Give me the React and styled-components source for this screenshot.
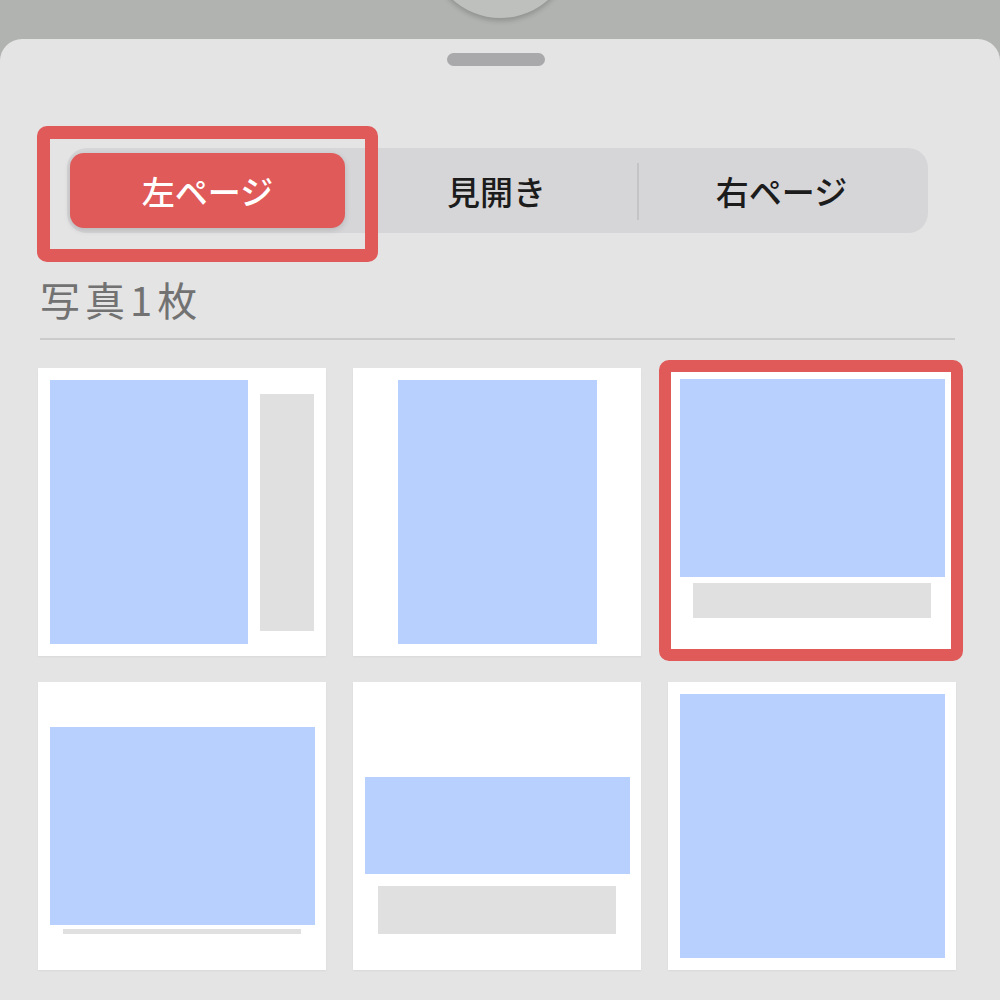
import styled, { createGlobalStyle } from 'styled-components'

const GlobalStyle = createGlobalStyle`
    html, body {
        margin: 0;
        padding: 0;
        background: #b1b3b0;
        font-family: "Noto Sans CJK JP", "Noto Sans", sans-serif;
    }
`

const RED = '#e05a5a'

const Screen = styled.div`
    width: 1000px;
    height: 1000px;
    display: flex;
    flex-direction: column;
    background: #b1b3b0;
    overflow: hidden;
    position: relative;
`

const TopBar = styled.div`
    height: 39px;
    flex-shrink: 0;
    display: flex;
    justify-content: center;
    position: relative;
`

const Knob = styled.div`
    position: absolute;
    top: -125px;
    width: 143px;
    height: 143px;
    border-radius: 50%;
    background: #bec0bd;
    box-shadow: 0 3px 5px rgba(0, 0, 0, 0.18);
`

const Sheet = styled.div`
    flex: 1;
    background: #e4e4e4;
    border-radius: 22px 22px 0 0;
    padding: 14px 45px 0 38px;
    display: flex;
    flex-direction: column;
`

const Handle = styled.div`
    align-self: center;
    width: 98px;
    height: 13px;
    border-radius: 7px;
    background: #a9a9ab;
    margin-left: -1px;
`

const Segmented = styled.div`
    position: relative;
    margin: 82px 27px 0 29px;
    height: 85px;
    box-sizing: border-box;
    padding: 5px 4px 5px 3px;
    display: flex;
    align-items: stretch;
    background: #d6d6d8;
    border-radius: 20px;
`

const Segment = styled.div`
    flex: ${p => (p.$active ? '0 0 275px' : '1')};
    margin-right: ${p => (p.$active ? '9px' : '0')};
    display: flex;
    align-items: center;
    justify-content: center;
    font-size: 33px;
    font-weight: 500;
    color: ${p => (p.$active ? '#ffffff' : '#1c1c1c')};
    background: ${p => (p.$active ? RED : 'transparent')};
    border-radius: 14px;
    box-shadow: ${p => (p.$active ? '0 2px 6px rgba(0, 0, 0, 0.15)' : 'none')};
    border-left: ${p => (p.$divider ? '2px solid #c4c4c6' : 'none')};
    border-radius: ${p => (p.$divider ? '0' : '14px')};
    margin-top: ${p => (p.$divider ? '10px' : '0')};
    margin-bottom: ${p => (p.$divider ? '8px' : '0')};
    margin-left: ${p => (p.$divider ? '-2px' : '0')};
`

const Label = styled.span`
    margin-top: ${p => (p.$shift ? '-10px' : '0')};
    margin-bottom: ${p => (p.$shift ? '-8px' : '0')};
`

const Highlight = styled.div`
    position: absolute;
    box-sizing: border-box;
    border: ${p => p.$border}px solid ${RED};
    border-radius: 10px;
    pointer-events: none;
`

const SegmentHighlight = styled(Highlight)`
    left: -30px;
    top: -22px;
    width: 341px;
    height: 136px;
`

const Title = styled.div`
    margin: 43px 0 0 2px;
    font-size: 40px;
    line-height: 46px;
    letter-spacing: 5px;
    color: #727272;
`

const Rule = styled.div`
    margin: 16px 0 0 2px;
    height: 2px;
    background: #cbcbcb;
`

const Grid = styled.div`
    margin-top: 28px;
    display: grid;
    grid-template-columns: repeat(3, 288px);
    grid-auto-rows: 288px;
    column-gap: 27px;
    row-gap: 26px;
`

const Card = styled.div`
    position: relative;
    background: #ffffff;
    box-sizing: border-box;
    display: flex;
    flex-direction: ${p => p.$dir || 'column'};
    align-items: center;
    justify-content: ${p => p.$justify || 'flex-start'};
    padding-top: ${p => p.$top || 0}px;
    padding-left: ${p => p.$left || 0}px;
    gap: ${p => p.$gap || 0}px;
    box-shadow: 0 1px 2px rgba(0, 0, 0, 0.05);
`

const Block = styled.div`
    flex-shrink: 0;
    width: ${p => p.$w}px;
    height: ${p => p.$h}px;
    background: ${p => (p.$photo ? '#b8d0fe' : '#e0e0e0')};
`

const CardHighlight = styled(Highlight)`
    left: -9px;
    top: -8px;
    width: 304px;
    height: 301px;
`

const SEGMENTS = ['左ページ', '見開き', '右ページ']

const App = () => {
    return (
        <>
            <GlobalStyle />
            <Screen>
                <TopBar>
                    <Knob />
                </TopBar>
                <Sheet>
                    <Handle />
                    <Segmented>
                        {SEGMENTS.map((label, i) => (
                            <Segment key={label} $active={i === 0} $divider={i === 2}>
                                <Label $shift={i === 2}>{label}</Label>
                            </Segment>
                        ))}
                        <SegmentHighlight $border={13} />
                    </Segmented>
                    <Title>写真1枚</Title>
                    <Rule />
                    <Grid>
                        <Card $dir="row" $left={12} $gap={12}>
                            <Block $photo $w={198} $h={264} />
                            <Block $w={54} $h={237} />
                        </Card>
                        <Card $justify="center">
                            <Block $photo $w={199} $h={264} />
                        </Card>
                        <Card $top={11} $gap={6}>
                            <Block $photo $w={265} $h={198} />
                            <Block $w={238} $h={35} />
                            <CardHighlight $border={12} />
                        </Card>
                        <Card $top={45} $gap={4}>
                            <Block $photo $w={265} $h={198} />
                            <Block $w={238} $h={5} />
                        </Card>
                        <Card $top={95} $gap={12}>
                            <Block $photo $w={265} $h={97} />
                            <Block $w={238} $h={48} />
                        </Card>
                        <Card $top={12}>
                            <Block $photo $w={265} $h={264} />
                        </Card>
                    </Grid>
                </Sheet>
            </Screen>
        </>
    )
}

export default App
